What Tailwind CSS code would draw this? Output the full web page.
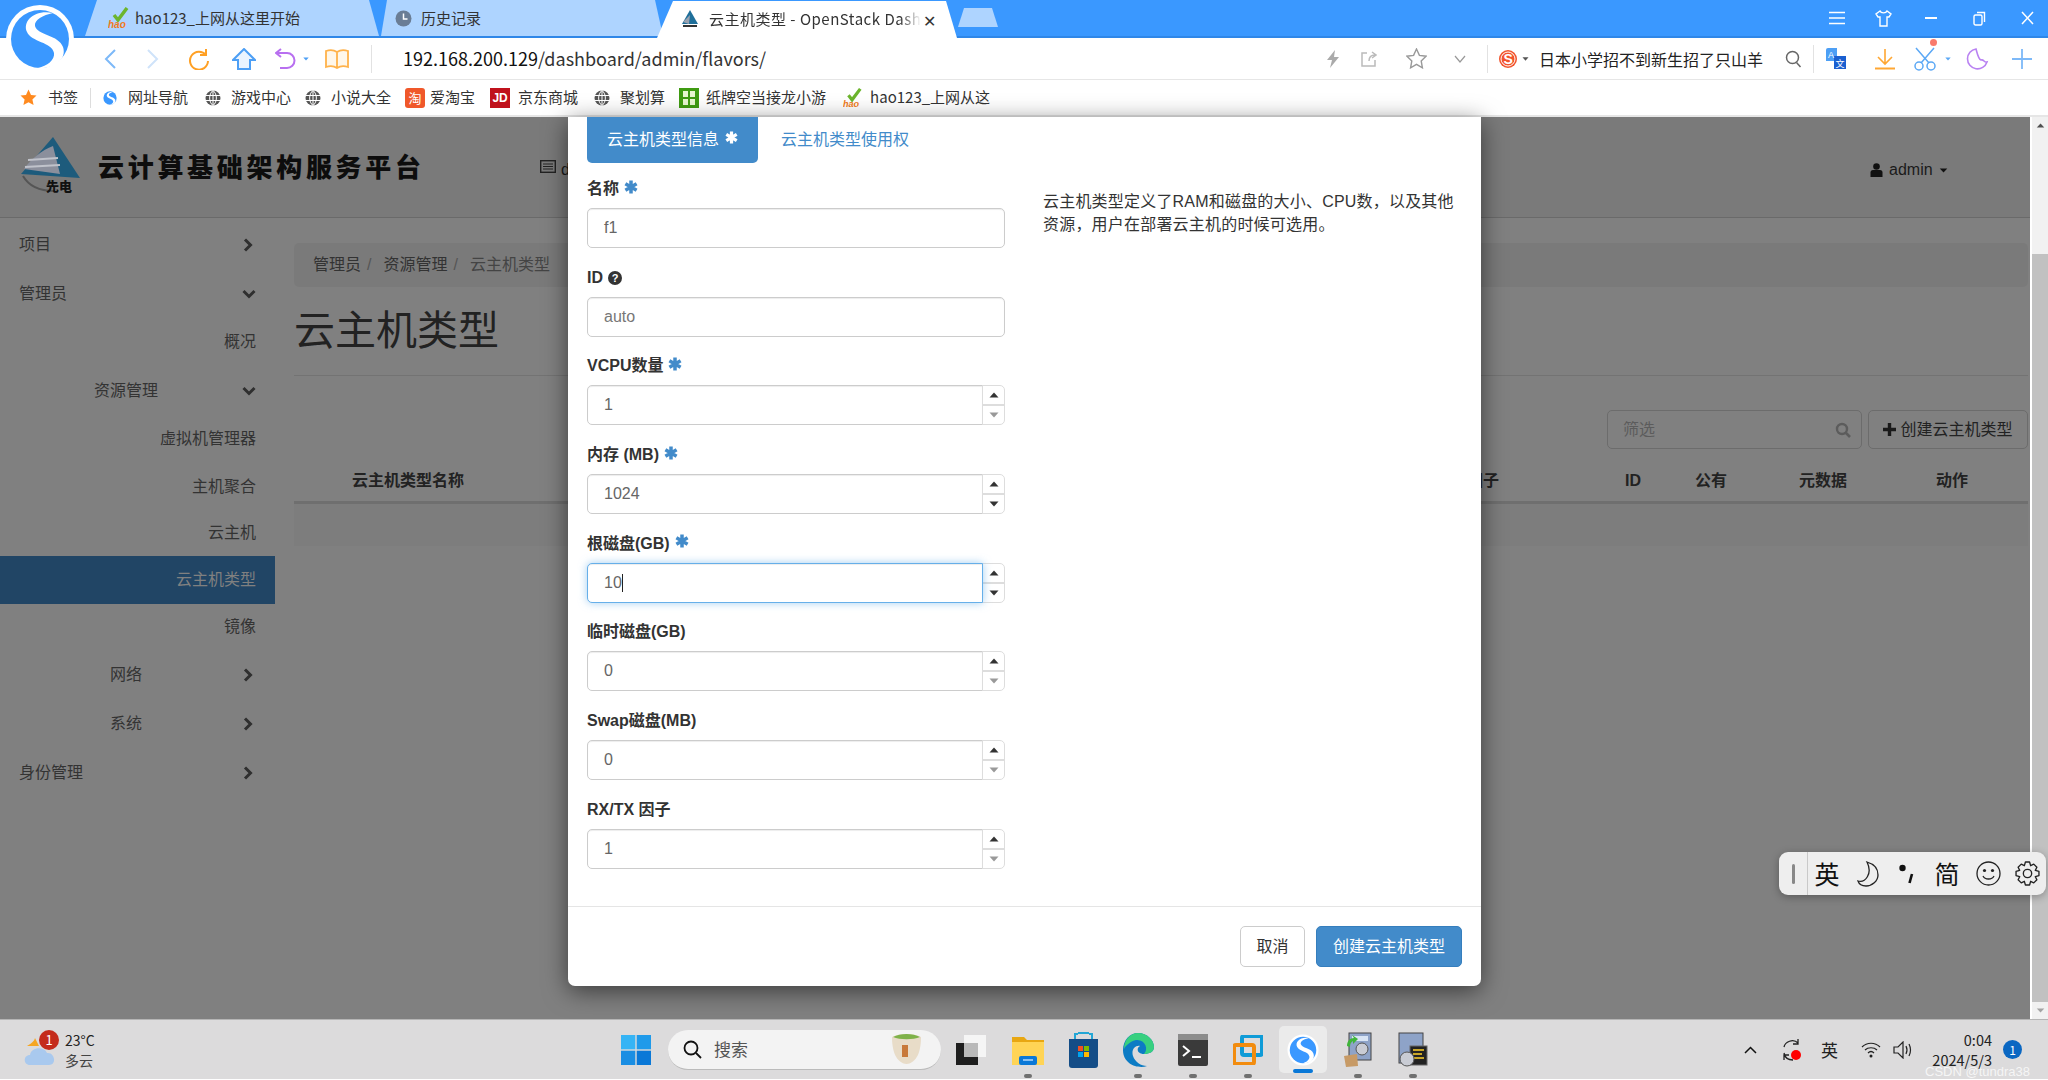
<!DOCTYPE html>
<html lang="zh-CN">
<head>
<meta charset="utf-8">
<title>云主机类型 - OpenStack Dashboard</title>
<script src="https://cdn.jsdelivr.net/npm/@tailwindcss/browser@4"></script>
</head>
<body class="m-0 overflow-hidden">
<svg width="0" height="0" class="absolute">
  <defs>
    <symbol id="ast" viewBox="0 0 12 12"><path d="M6 0.5V11.5M1.2 3.2L10.8 8.8M10.8 3.2L1.2 8.8" stroke="currentColor" stroke-width="3" fill="none"/></symbol>
    <symbol id="globe" viewBox="0 0 16 16"><circle cx="8" cy="8" r="7.5" fill="#555"/><path d="M0.5 5.5H15.5M0.5 10.5H15.5M8 0.5V15.5M8 0.5C3.5 4 3.5 12 8 15.5M8 0.5C12.5 4 12.5 12 8 15.5" stroke="#fff" stroke-width="1" fill="none"/></symbol>
    <symbol id="up" viewBox="0 0 10 6"><path d="M5 0.5L9.5 5.5H0.5Z" fill="currentColor"/></symbol>
    <symbol id="down" viewBox="0 0 10 6"><path d="M5 5.5L9.5 0.5H0.5Z" fill="currentColor"/></symbol>
    <symbol id="chevr" viewBox="0 0 10 14"><path d="M2 1.5L7.5 7L2 12.5" stroke="currentColor" stroke-width="3" fill="none"/></symbol>
    <symbol id="chevd" viewBox="0 0 14 10"><path d="M1.5 2L7 7.5L12.5 2" stroke="currentColor" stroke-width="3" fill="none"/></symbol>
    <symbol id="sogou" viewBox="0 0 70 70"><circle cx="35" cy="35" r="34" fill="#fff"/><circle cx="35" cy="35" r="29" fill="#3a98ff"/><path d="M48 9C30 5 17 17 22 28C26 38 47 38 49 49C50 56 42 62 33 64C50 65 62 55 58 43C54 31 32 31 30 22C29 16 38 11 48 9Z" fill="#fff"/></symbol>
    <symbol id="hao" viewBox="0 0 22 22"><path d="M6 8L10 13L19 1" stroke="#6cb52d" stroke-width="3.5" fill="none"/><text x="0" y="21" font-size="10" font-style="italic" font-weight="700" fill="#f07a1a" font-family="Liberation Sans">hao</text></symbol>
    <symbol id="lock" viewBox="0 0 30 36"><rect x="6" y="1" width="22" height="27" fill="#8ea3c8" stroke="#444"/><rect x="9" y="4" width="16" height="5" fill="#d8e4f4"/><circle cx="19" cy="17" r="6" fill="#c9ccd4" stroke="#555"/><path d="M1 24L14 22L15 34L3 35Z" fill="#c79a66"/><path d="M4 14C4 9 7 6 11 6L9 3L15 7L10 12L10 9C8 10 7 12 7 15Z" fill="#3fb53a"/></symbol>
  </defs>
</svg>

<div class="relative w-[2048px] h-[1080px] flex flex-col overflow-hidden bg-white font-['Noto_Sans_CJK_SC','Liberation_Sans',sans-serif]">

  <!-- browser logo -->
  <svg class="absolute left-[5px] top-[4px] w-[70px] h-[70px] z-20"><use href="#sogou"/></svg>

  <!-- tab strip -->
  <div class="h-[38px] flex items-end bg-[#3a98ff] border-b-2 border-[#2f87e8] pl-[85px] shrink-0">
    <div class="w-[294px] h-[36px] bg-[#aed4ff] [clip-path:polygon(12px_0,284px_0,100%_100%,0_100%)] flex items-center pl-[23px] text-[15px] text-[#333]">
      <svg class="w-[22px] h-[22px] mr-[5px]"><use href="#hao"/></svg>hao123_上网从这里开始
    </div>
    <div class="w-[282px] h-[36px] ml-[2px] bg-[#aed4ff] [clip-path:polygon(6px_0,274px_0,100%_100%,0_100%)] flex items-center pl-[14px] text-[15px] text-[#333]">
      <svg class="w-[17px] h-[17px] mr-[9px]" viewBox="0 0 17 17"><circle cx="8.5" cy="8.5" r="8" fill="#6a7d95"/><path d="M8.5 3.5V9H12.5" stroke="#fff" stroke-width="1.5" fill="none"/></svg>历史记录
    </div>
    <div class="w-[300px] h-[37px] -ml-[6px] -mb-[2px] bg-white [clip-path:polygon(16px_0,289px_0,100%_100%,0_100%)] flex items-center pl-[23px] text-[15px] text-[#333]">
      <svg class="w-[20px] h-[22px] mr-[9px] shrink-0" viewBox="0 0 20 22"><path d="M10 1L18 15H2Z" fill="#1f6f9a"/><path d="M3 13L10 6L9 15Z" fill="#9aa2b0"/><path d="M3 17H17" stroke="#333" stroke-width="2"/></svg>
      <span class="w-[212px] overflow-hidden whitespace-nowrap tracking-[0.5px] [mask-image:linear-gradient(to_right,black_90%,transparent)]">云主机类型 - OpenStack Dash</span>
      <span class="ml-[2px] text-[16px] leading-none">✕</span>
    </div>
    <div class="ml-[1px] mb-[9px] w-[40px] h-[19px] bg-[#aed4ff] [clip-path:polygon(6px_0,34px_0,100%_100%,0_100%)]"></div>
    <div class="ml-auto flex items-center self-start h-[36px] text-white">
      <svg class="w-[16px] h-[14px] mr-[30px]" viewBox="0 0 16 14"><path d="M0 1.5H16M0 7H16M0 12.5H16" stroke="#fff" stroke-width="1.6"/></svg>
      <svg class="w-[17px] h-[17px] mr-[33px]" viewBox="0 0 17 17"><path d="M5 1L1 4L3 7H5V16H12V7H14L16 4L12 1C11 3.5 6 3.5 5 1Z" stroke="#fff" stroke-width="1.4" fill="none"/></svg>
      <svg class="w-[12px] h-[2px] mr-[36px]" viewBox="0 0 12 2"><path d="M0 1H12" stroke="#fff" stroke-width="2"/></svg>
      <svg class="w-[13px] h-[15px] mr-[35px]" viewBox="0 0 13 15"><rect x="1" y="4" width="8" height="10" rx="1.5" stroke="#fff" stroke-width="1.4" fill="none"/><path d="M4 1.5H11.5V11" stroke="#fff" stroke-width="1.4" fill="none"/></svg>
      <svg class="w-[13px] h-[14px] mr-[14px]" viewBox="0 0 13 14"><path d="M1 1L12 13M12 1L1 13" stroke="#fff" stroke-width="1.5"/></svg>
    </div>
  </div>

  <!-- address bar -->
  <div class="h-[42px] flex items-center pl-[103px] shrink-0 border-b border-[#e6e6e6]">
    <svg class="w-[14px] h-[20px] mr-[29px]" viewBox="0 0 14 20"><path d="M12 1L3 10L12 19" stroke="#7db9f8" stroke-width="2" fill="none"/></svg>
    <svg class="w-[14px] h-[20px] mr-[28px]" viewBox="0 0 14 20"><path d="M2 1L11 10L2 19" stroke="#cfe3fa" stroke-width="2" fill="none"/></svg>
    <svg class="w-[22px] h-[22px] mr-[22px]" viewBox="0 0 22 22"><path d="M18 7A9 9 0 1 0 20 13M18 1V7H12" stroke="#ffa024" stroke-width="2" fill="none"/></svg>
    <svg class="w-[24px] h-[22px] mr-[19px]" viewBox="0 0 24 22"><path d="M12 1L23 12H18V21H6V12H1Z" stroke="#4d9ff5" stroke-width="2" fill="#eaf4ff"/></svg>
    <svg class="w-[22px] h-[22px]" viewBox="0 0 22 22"><path d="M6 1L1 5L6 9M1 5H12A7.5 7.5 0 0 1 12 20H5" stroke="#b86ff0" stroke-width="2" fill="none"/></svg>
    <svg class="w-[6px] h-[4px] ml-[6px] mr-[16px] text-[#4d9ff5]"><use href="#down"/></svg>
    <svg class="w-[24px] h-[20px] mr-[22px]" viewBox="0 0 24 20"><path d="M12 3C9 1 4 1 1 2V18C4 17 9 17 12 19C15 17 20 17 23 18V2C20 1 15 1 12 3ZM12 3V19" stroke="#ffb24a" stroke-width="1.8" fill="#fff7ea"/></svg>
    <div class="w-px h-[28px] bg-[#e2e2e2] mr-[31px]"></div>
    <div class="text-[18px] text-[#333] whitespace-nowrap w-[380px]"><span class="text-[#111]">192.168.200.129</span>/dashboard/admin/flavors/</div>
    <div class="ml-auto flex items-center">
      <svg class="w-[14px] h-[18px] mr-[21px]" viewBox="0 0 14 18"><path d="M9 0L1 10H6L4 18L13 7H8Z" fill="#aaa"/></svg>
      <svg class="w-[16px] h-[16px] mr-[29px]" viewBox="0 0 16 16"><path d="M6 2H1V15H14V9M8 10C8 6 10 4 14 4M11 1L15 4L11 7" stroke="#bbb" stroke-width="1.5" fill="none"/></svg>
      <svg class="w-[21px] h-[21px] mr-[27px]" viewBox="0 0 21 21"><path d="M10.5 1L13.4 7.4L20 8.2L15.2 12.9L16.4 19.8L10.5 16.4L4.6 19.8L5.8 12.9L1 8.2L7.6 7.4Z" stroke="#999" stroke-width="1.4" fill="none"/></svg>
      <svg class="w-[12px] h-[8px] mr-[21px]" viewBox="0 0 12 8"><path d="M1 1L6 7L11 1" stroke="#999" stroke-width="1.2" fill="none"/></svg>
      <div class="w-px h-[28px] bg-[#e2e2e2] mr-[10px]"></div>
      <svg class="w-[20px] h-[20px] mr-[4px]" viewBox="0 0 20 20"><circle cx="10" cy="10" r="9" fill="#f2542d"/><circle cx="10" cy="10" r="7" fill="none" stroke="#fff"/><text x="5.5" y="15" font-size="14" font-weight="700" fill="#fff" font-family="Liberation Sans">S</text></svg>
      <svg class="w-[7px] h-[4px] mr-[10px] text-[#555]"><use href="#down"/></svg>
      <div class="text-[16px] text-[#222] whitespace-nowrap w-[228px]">日本小学招不到新生招了只山羊</div>
      <svg class="w-[17px] h-[18px] ml-[18px] mr-[11px]" viewBox="0 0 17 18"><circle cx="7.5" cy="7.5" r="6" stroke="#666" stroke-width="1.5" fill="none"/><path d="M11.5 12.5L15.5 17" stroke="#666" stroke-width="1.5"/></svg>
      <div class="w-px h-[28px] bg-[#e2e2e2] mr-[11px]"></div>
      <svg class="w-[21px] h-[21px] mr-[28px]" viewBox="0 0 21 21"><path d="M1 2Q1 0 3 0H12V13H1Z" fill="#4d9ff5"/><path d="M9 8H21V21H9Z" fill="#1a5fd0"/><text x="3" y="10" font-size="9" fill="#fff" font-family="Liberation Sans">A</text><text x="10.5" y="19" font-size="9" fill="#fff" font-family="Noto Sans CJK SC">文</text></svg>
      <svg class="w-[22px] h-[22px] mr-[17px]" viewBox="0 0 22 22"><path d="M11 1V15M4 9L11 16L18 9" stroke="#ffa733" stroke-width="1.6" fill="none"/><path d="M1 20.5H21" stroke="#ffa733" stroke-width="2"/></svg>
      <div class="relative w-[24px] h-[24px] mr-[8px]">
        <svg class="w-[24px] h-[24px]" viewBox="0 0 24 24"><circle cx="6" cy="19" r="4" stroke="#5ba8f5" stroke-width="1.5" fill="none"/><circle cx="18" cy="19" r="4" stroke="#5ba8f5" stroke-width="1.5" fill="none"/><path d="M3 1L16 16M21 1L8 16" stroke="#5ba8f5" stroke-width="1.5"/></svg>
        <span class="absolute -top-[8px] right-[0px] w-[7px] h-[7px] rounded-full bg-[#f97a6c]"></span>
      </div>
      <svg class="w-[6px] h-[4px] mr-[14px] text-[#5ba8f5]"><use href="#down"/></svg>
      <svg class="w-[24px] h-[24px] mr-[23px]" viewBox="0 0 24 24"><path d="M11 2A10 10 0 1 0 22 15C19 16 19 12 16 13C13 12 12 5 11 2Z" stroke="#b982f2" stroke-width="1.6" fill="none"/></svg>
      <svg class="w-[20px] h-[20px] mr-[16px]" viewBox="0 0 20 20"><path d="M10 0V20M0 10H20" stroke="#7db9f8" stroke-width="1.8"/></svg>
    </div>
  </div>

  <!-- bookmarks -->
  <div class="h-[37px] flex items-center pl-[20px] text-[15px] text-[#333] whitespace-nowrap shrink-0 border-b-2 border-[#e6e6e6]">
    <svg class="w-[17px] h-[17px] mr-[11px]" viewBox="0 0 17 17"><path d="M8.5 0.5L11 6L16.5 6.6L12.4 10.4L13.6 16L8.5 13.2L3.4 16L4.6 10.4L0.5 6.6L6 6Z" fill="#ff8a1f"/></svg>
    <span>书签</span>
    <div class="w-px h-[20px] bg-[#ddd] ml-[12px] mr-[11px]"></div>
    <svg class="w-[16px] h-[16px] mr-[10px]"><use href="#sogou"/></svg><span class="mr-[17px]">网址导航</span>
    <svg class="w-[16px] h-[16px] mr-[10px]"><use href="#globe"/></svg><span class="mr-[14px]">游戏中心</span>
    <svg class="w-[16px] h-[16px] mr-[10px]"><use href="#globe"/></svg><span class="mr-[14px]">小说大全</span>
    <div class="w-[20px] h-[20px] rounded-[3px] bg-[#f0582a] text-white text-[13px] leading-[20px] text-center mr-[5px]">淘</div><span class="mr-[15px]">爱淘宝</span>
    <div class="w-[20px] h-[20px] bg-[#c0121c] text-white text-[12px] font-bold leading-[20px] text-center mr-[8px] font-['Liberation_Sans']">JD</div><span class="mr-[16px]">京东商城</span>
    <svg class="w-[16px] h-[16px] mr-[10px]"><use href="#globe"/></svg><span class="mr-[14px]">聚划算</span>
    <svg class="w-[20px] h-[20px] mr-[7px]" viewBox="0 0 20 20"><rect width="20" height="20" fill="#3f9b12"/><path d="M4 3H9V9H4ZM11 3H16V9H11ZM4 11H9V17H4ZM11 11H16V17H11Z" fill="#e8f7d0"/></svg>
    <span class="w-[120px] mr-[17px]">纸牌空当接龙小游</span>
    <svg class="w-[20px] h-[20px] mr-[7px]"><use href="#hao"/></svg><span>hao123_上网从这</span>
  </div>

  <!-- web page area -->
  <div class="relative h-[902px] flex shrink-0 font-['Liberation_Sans','Noto_Sans_CJK_SC',sans-serif] text-[16px]">
    <div class="w-[2030px] h-full flex flex-col bg-[#808080]">
      <!-- navbar -->
      <div class="h-[101px] shrink-0 bg-[#7a7a7a] border-b border-[#6a6a6a] relative flex items-center text-[#1a1a1a]">
        <svg class="ml-[20px] w-[62px] h-[58px] -mt-[5px] shrink-0" viewBox="0 0 62 58"><path d="M33 1L60 42L1 38Z" fill="#1d5b7c"/><path d="M33 10L40 38L4 33C12 22 22 14 33 10Z" fill="#8b8f9c"/><path d="M8 24L38 22M5 31L40 29" stroke="#c0c3cb" stroke-width="2"/><path d="M3 40C10 52 22 55 34 55" stroke="#555" stroke-width="2" fill="none"/><text x="26" y="55" font-size="13" font-weight="900" fill="#111" font-family="Noto Sans CJK SC">先电</text></svg>
        <div class="ml-[16px] -mt-[4px] w-[330px] text-[26px] font-black tracking-[3.7px] whitespace-nowrap text-[#0d0d0d] font-['Noto_Sans_CJK_SC']">云计算基础架构服务平台</div>
        <svg class="absolute left-[540px] top-[43px] w-[16px] h-[13px]" viewBox="0 0 16 13"><rect x="0.7" y="0.7" width="14.6" height="11.6" fill="none" stroke="#222" stroke-width="1.4"/><path d="M3 4H13M3 6.5H13M3 9H13" stroke="#222" stroke-width="1.2"/></svg>
        <span class="absolute left-[561px] top-[41px]">d</span>
        <div class="absolute left-[1870px] top-[41px] flex items-center text-[#1a1a1a]">
          <svg class="w-[13px] h-[14px] mr-[6px]" viewBox="0 0 13 14"><circle cx="6.5" cy="3.5" r="3.3" fill="#111"/><path d="M0.5 14V9.5Q0.5 7 3 7H10Q12.5 7 12.5 9.5V14Z" fill="#111"/></svg>
          <span>admin</span>
          <svg class="w-[9px] h-[5px] ml-[6px] text-[#111]"><use href="#down"/></svg>
        </div>
      </div>
      <div class="flex flex-1">
        <!-- sidebar -->
        <div class="w-[275px] shrink-0 pt-[3px] text-[#333]">
          <div class="h-[48px] flex items-center justify-between pl-[19px] pr-[22px]"><span>项目</span><svg class="w-[10px] h-[14px] text-[#2f2f2f]"><use href="#chevr"/></svg></div>
          <div class="h-[49px] flex items-center justify-between pl-[19px] pr-[19px]"><span>管理员</span><svg class="w-[14px] h-[10px] text-[#2f2f2f]"><use href="#chevd"/></svg></div>
          <div class="h-[48px] flex items-center justify-end pr-[19px]">概况</div>
          <div class="h-[49px] flex items-center justify-between pl-[94px] pr-[19px]"><span>资源管理</span><svg class="w-[14px] h-[10px] text-[#2f2f2f]"><use href="#chevd"/></svg></div>
          <div class="h-[48px] flex items-center justify-end pr-[19px]">虚拟机管理器</div>
          <div class="h-[47px] flex items-center justify-end pr-[19px]">主机聚合</div>
          <div class="h-[46px] flex items-center justify-end pr-[19px]">云主机</div>
          <div class="h-[48px] flex items-center justify-end pr-[19px] bg-[#214565] text-[#808080]">云主机类型</div>
          <div class="h-[46px] flex items-center justify-end pr-[19px]">镜像</div>
          <div class="h-[49px] flex items-center justify-between pl-[110px] pr-[22px]"><span>网络</span><svg class="w-[10px] h-[14px] text-[#2f2f2f]"><use href="#chevr"/></svg></div>
          <div class="h-[49px] flex items-center justify-between pl-[110px] pr-[22px]"><span>系统</span><svg class="w-[10px] h-[14px] text-[#2f2f2f]"><use href="#chevr"/></svg></div>
          <div class="h-[49px] flex items-center justify-between pl-[19px] pr-[22px]"><span>身份管理</span><svg class="w-[10px] h-[14px] text-[#2f2f2f]"><use href="#chevr"/></svg></div>
        </div>
        <!-- main -->
        <div class="flex-1 pl-[19px] pr-[2px] pt-[25px] text-[#222]">
          <div class="h-[44px] rounded-[5px] bg-[#7a7a7a] pl-[19px] flex items-center text-[#333]">
            <span>管理员</span><span class="mx-[6px] text-[#555]">/</span><span class="ml-[6px]">资源管理</span><span class="mx-[6px] text-[#555]">/</span><span class="ml-[6px] text-[#444]">云主机类型</span>
          </div>
          <div class="h-[89px] pt-[14px] border-b border-[#737373] text-[41px] leading-[60px] text-[#222]">云主机类型</div>
          <div class="mt-[34px] flex justify-end gap-[6px]">
            <div class="w-[255px] h-[39px] rounded-[5px] border border-[#6c6c6c] flex items-center justify-between pl-[15px] pr-[10px] text-[#5c5c5c]">
              <span>筛选</span>
              <svg class="w-[16px] h-[16px]" viewBox="0 0 16 16"><circle cx="7" cy="7" r="5" stroke="#5c5c5c" stroke-width="2.4" fill="none"/><path d="M10.5 10.5L15 15" stroke="#5c5c5c" stroke-width="2.6"/></svg>
            </div>
            <div class="w-[160px] h-[39px] rounded-[5px] border border-[#6c6c6c] flex items-center justify-center text-[#222]">
              <svg class="w-[13px] h-[13px] mr-[4px]" viewBox="0 0 13 13"><path d="M6.5 0V13M0 6.5H13" stroke="#1a1a1a" stroke-width="3.4"/></svg>创建云主机类型
            </div>
          </div>
          <div class="mt-[11px] h-[44px] flex items-center border-b-[3px] border-[#6f6f6f] font-bold text-[#222]">
            <div class="w-[1205px] pl-[58px] flex justify-between"><span>云主机类型名称</span><span>因子</span></div>
            <span class="ml-[126px] w-[16px]">ID</span>
            <span class="ml-[54px]">公有</span>
            <span class="ml-[72px]">元数据</span>
            <span class="ml-[89px]">动作</span>
          </div>
          <div class="h-[42px] bg-[#7d7d7d]"></div>
        </div>
      </div>
    </div>

    <!-- scrollbar -->
    <div class="w-[18px] h-full bg-[#f1f1f1] flex flex-col items-center border-l-2 border-white">
      <div class="h-[17px] flex items-center justify-center"><svg class="w-[9px] h-[5px] text-[#505050]"><use href="#up"/></svg></div>
      <div class="mt-[120px] w-full h-[748px] bg-[#c1c1c1]"></div>
      <div class="mt-auto h-[17px] flex items-center justify-center"><svg class="w-[9px] h-[5px] text-[#a3a3a3]"><use href="#down"/></svg></div>
    </div>

    <!-- modal -->
    <div class="absolute left-[568px] top-0 w-[913px] h-[869px] bg-white rounded-b-[7px] shadow-[0_5px_25px_rgba(0,0,0,0.55)] flex flex-col text-[#333]">
      <div class="flex-1 pl-[19px] flex">
        <div class="w-[418px] shrink-0">
          <div class="flex h-[46px]">
            <div class="w-[171px] h-full rounded-b-[5px] bg-[#428bca] text-white pl-[20px] flex items-center">云主机类型信息<svg class="w-[13px] h-[13px] ml-[6px] -mt-[6px] text-white"><use href="#ast"/></svg></div>
            <div class="ml-[23px] flex items-center text-[#428bca]">云主机类型使用权</div>
          </div>
          <div class="mt-[14px] flex flex-col">
            <!-- name -->
            <div class="h-[88.7px]">
              <div class="h-[24px] mb-[7px] flex items-center font-bold">名称<svg class="w-[14px] h-[14px] ml-[5px] -mt-[5px] text-[#428bca]"><use href="#ast"/></svg></div>
              <div class="h-[40px] rounded-[5px] border border-[#ccc] shadow-[inset_0_1px_1px_rgba(0,0,0,0.075)] flex items-center pl-[16px] text-[#666]">f1</div>
            </div>
            <!-- id -->
            <div class="h-[88.7px]">
              <div class="h-[24px] mb-[7px] flex items-center font-bold">ID<svg class="w-[14px] h-[14px] ml-[5px]" viewBox="0 0 14 14"><circle cx="7" cy="7" r="7" fill="#333"/><text x="7" y="11" text-anchor="middle" font-size="11" font-weight="700" fill="#fff" font-family="Liberation Sans">?</text></svg></div>
              <div class="h-[40px] rounded-[5px] border border-[#ccc] shadow-[inset_0_1px_1px_rgba(0,0,0,0.075)] flex items-center pl-[16px] text-[#777]">auto</div>
            </div>
            <!-- vcpu -->
            <div class="h-[88.7px]">
              <div class="h-[24px] mb-[7px] flex items-center font-bold">VCPU数量<svg class="w-[14px] h-[14px] ml-[5px] -mt-[5px] text-[#428bca]"><use href="#ast"/></svg></div>
              <div class="h-[40px] flex">
                <div class="flex-1 rounded-l-[5px] border border-[#ccc] shadow-[inset_0_1px_1px_rgba(0,0,0,0.075)] flex items-center pl-[16px] text-[#666]">1</div>
                <div class="w-[23px] -ml-px flex flex-col rounded-r-[5px] border border-[#ddd]">
                  <div class="flex-1 flex items-center justify-center border-b-2 border-[#ddd] text-[#333]"><svg class="w-[10px] h-[6px]"><use href="#up"/></svg></div>
                  <div class="flex-1 flex items-center justify-center text-[#999]"><svg class="w-[10px] h-[6px]"><use href="#down"/></svg></div>
                </div>
              </div>
            </div>
            <!-- ram -->
            <div class="h-[88.7px]">
              <div class="h-[24px] mb-[7px] flex items-center font-bold">内存 (MB)<svg class="w-[14px] h-[14px] ml-[5px] -mt-[5px] text-[#428bca]"><use href="#ast"/></svg></div>
              <div class="h-[40px] flex">
                <div class="flex-1 rounded-l-[5px] border border-[#ccc] shadow-[inset_0_1px_1px_rgba(0,0,0,0.075)] flex items-center pl-[16px] text-[#666]">1024</div>
                <div class="w-[23px] -ml-px flex flex-col rounded-r-[5px] border border-[#ddd]">
                  <div class="flex-1 flex items-center justify-center border-b-2 border-[#ddd] text-[#333]"><svg class="w-[10px] h-[6px]"><use href="#up"/></svg></div>
                  <div class="flex-1 flex items-center justify-center text-[#333]"><svg class="w-[10px] h-[6px]"><use href="#down"/></svg></div>
                </div>
              </div>
            </div>
            <!-- disk -->
            <div class="h-[88.7px]">
              <div class="h-[24px] mb-[7px] flex items-center font-bold">根磁盘(GB)<svg class="w-[14px] h-[14px] ml-[5px] -mt-[5px] text-[#428bca]"><use href="#ast"/></svg></div>
              <div class="h-[40px] flex">
                <div class="relative z-10 flex-1 rounded-l-[5px] border border-[#66afe9] shadow-[inset_0_1px_1px_rgba(0,0,0,0.075),0_0_8px_rgba(102,175,233,0.6)] flex items-center pl-[16px] text-[#666] bg-white">10<span class="w-[1px] h-[18px] bg-[#222]"></span></div>
                <div class="w-[23px] -ml-px flex flex-col rounded-r-[5px] border border-[#ddd]">
                  <div class="flex-1 flex items-center justify-center border-b-2 border-[#ddd] text-[#333]"><svg class="w-[10px] h-[6px]"><use href="#up"/></svg></div>
                  <div class="flex-1 flex items-center justify-center text-[#333]"><svg class="w-[10px] h-[6px]"><use href="#down"/></svg></div>
                </div>
              </div>
            </div>
            <!-- ephemeral -->
            <div class="h-[88.7px]">
              <div class="h-[24px] mb-[7px] flex items-center font-bold">临时磁盘(GB)</div>
              <div class="h-[40px] flex">
                <div class="flex-1 rounded-l-[5px] border border-[#ccc] shadow-[inset_0_1px_1px_rgba(0,0,0,0.075)] flex items-center pl-[16px] text-[#666]">0</div>
                <div class="w-[23px] -ml-px flex flex-col rounded-r-[5px] border border-[#ddd]">
                  <div class="flex-1 flex items-center justify-center border-b-2 border-[#ddd] text-[#333]"><svg class="w-[10px] h-[6px]"><use href="#up"/></svg></div>
                  <div class="flex-1 flex items-center justify-center text-[#999]"><svg class="w-[10px] h-[6px]"><use href="#down"/></svg></div>
                </div>
              </div>
            </div>
            <!-- swap -->
            <div class="h-[88.7px]">
              <div class="h-[24px] mb-[7px] flex items-center font-bold">Swap磁盘(MB)</div>
              <div class="h-[40px] flex">
                <div class="flex-1 rounded-l-[5px] border border-[#ccc] shadow-[inset_0_1px_1px_rgba(0,0,0,0.075)] flex items-center pl-[16px] text-[#666]">0</div>
                <div class="w-[23px] -ml-px flex flex-col rounded-r-[5px] border border-[#ddd]">
                  <div class="flex-1 flex items-center justify-center border-b-2 border-[#ddd] text-[#333]"><svg class="w-[10px] h-[6px]"><use href="#up"/></svg></div>
                  <div class="flex-1 flex items-center justify-center text-[#999]"><svg class="w-[10px] h-[6px]"><use href="#down"/></svg></div>
                </div>
              </div>
            </div>
            <!-- rxtx -->
            <div class="h-[88.7px]">
              <div class="h-[24px] mb-[7px] flex items-center font-bold">RX/TX 因子</div>
              <div class="h-[40px] flex">
                <div class="flex-1 rounded-l-[5px] border border-[#ccc] shadow-[inset_0_1px_1px_rgba(0,0,0,0.075)] flex items-center pl-[16px] text-[#666]">1</div>
                <div class="w-[23px] -ml-px flex flex-col rounded-r-[5px] border border-[#ddd]">
                  <div class="flex-1 flex items-center justify-center border-b-2 border-[#ddd] text-[#333]"><svg class="w-[10px] h-[6px]"><use href="#up"/></svg></div>
                  <div class="flex-1 flex items-center justify-center text-[#999]"><svg class="w-[10px] h-[6px]"><use href="#down"/></svg></div>
                </div>
              </div>
            </div>
          </div>
        </div>
        <div class="ml-[38px] mt-[73px] w-[420px] leading-[23px] tracking-[0.2px] text-[#333]">云主机类型定义了RAM和磁盘的大小、CPU数，以及其他资源，用户在部署云主机的时候可选用。</div>
      </div>
      <div class="h-[80px] shrink-0 border-t border-[#e5e5e5] flex items-center justify-end gap-[11px] pr-[19px]">
        <div class="w-[65px] h-[41px] rounded-[5px] border border-[#ccc] flex items-center justify-center text-[#333]">取消</div>
        <div class="w-[146px] h-[41px] rounded-[5px] bg-[#428bca] border border-[#357ebd] flex items-center justify-center text-white">创建云主机类型</div>
      </div>
    </div>

    <!-- IME floating bar -->
    <div class="absolute left-[1779px] top-[735px] w-[267px] h-[43px] rounded-[9px] bg-[#eeeeee] shadow-[0_2px_8px_rgba(0,0,0,0.3)] flex items-center text-[#111] font-['Noto_Sans_CJK_SC']">
      <div class="w-[29px] h-full border-r border-[#c9c9c9] flex items-center justify-center"><span class="w-[3px] h-[20px] rounded-full bg-[#888]"></span></div>
      <span class="ml-[6px] w-[26px] text-[25px] leading-none text-center">英</span>
      <svg class="ml-[17px] w-[24px] h-[26px]" viewBox="0 0 24 26"><path d="M10 1C17 3 21 8 21 14C21 20 15 25 9 25C5 25 2 23 1 20C8 22 16 13 10 1Z" stroke="#222" stroke-width="1.3" fill="none"/></svg>
      <svg class="ml-[17px] w-[18px] h-[22px]" viewBox="0 0 18 22"><circle cx="4.5" cy="5" r="3.2" fill="#111"/><path d="M14 11L11.5 20" stroke="#111" stroke-width="2.6"/></svg>
      <span class="ml-[18px] w-[26px] text-[25px] leading-none text-center">简</span>
      <svg class="ml-[16px] w-[25px] h-[25px]" viewBox="0 0 25 25"><circle cx="12.5" cy="12.5" r="11.5" stroke="#222" stroke-width="1.3" fill="none"/><circle cx="8.5" cy="9.5" r="1.6" fill="#222"/><circle cx="16.5" cy="9.5" r="1.6" fill="#222"/><path d="M7 15C9 19 16 19 18 15" stroke="#222" stroke-width="1.3" fill="none"/></svg>
      <svg class="ml-[14px] w-[25px] h-[25px]" viewBox="0 0 24 24"><path d="M10 1H14L15 4.5L18 3L21 6L19.5 9L23 10V14L19.5 15L21 18L18 21L15 19.5L14 23H10L9 19.5L6 21L3 18L4.5 15L1 14V10L4.5 9L3 6L6 3L9 4.5Z" stroke="#222" stroke-width="1.3" fill="none" stroke-linejoin="round"/><circle cx="12" cy="12" r="4" stroke="#222" stroke-width="1.3" fill="none"/></svg>
    </div>
  </div>

  <!-- taskbar -->
  <div class="relative h-[60px] shrink-0 bg-[#dcdbdc] border-t border-[#b5b5b5] flex items-center font-['Noto_Sans_CJK_SC'] text-[#222]">
    <div class="relative ml-[24px] w-[32px] h-[36px]">
      <svg class="w-[32px] h-[36px]" viewBox="0 0 32 36"><path d="M3 14C6 12 10 10 11 6L15 14Z" fill="#f5a623"/><path d="M6 33C-1 33 -1 23 6 23C7 15 20 14 23 21C31 20 33 33 25 33Z" fill="#a9c9ee"/></svg>
      <span class="absolute left-[15px] -top-[2px] w-[20px] h-[20px] rounded-full bg-[#c42b1c] text-white text-[13px] leading-[20px] text-center">1</span>
    </div>
    <div class="ml-[9px] w-[40px] text-[14px] leading-[20px]"><div>23°C</div><div class="text-[#444]">多云</div></div>
    <svg class="ml-[516px] w-[30px] h-[30px]" viewBox="0 0 30 30"><rect width="14.3" height="14.3" fill="#35b4f5"/><rect x="15.7" width="14.3" height="14.3" fill="#1f9aea"/><rect y="15.7" width="14.3" height="14.3" fill="#1a8ee3"/><rect x="15.7" y="15.7" width="14.3" height="14.3" fill="#0a78d7"/></svg>
    <div class="ml-[17px] w-[273px] h-[40px] rounded-full bg-[#f3f3f3] border-b border-[#bbb] flex items-center pl-[15px] pr-[19px]">
      <svg class="w-[19px] h-[19px]" viewBox="0 0 19 19"><circle cx="8" cy="8" r="6.5" stroke="#111" stroke-width="1.8" fill="none"/><path d="M13 13L18 18" stroke="#111" stroke-width="1.8"/></svg>
      <span class="ml-[12px] text-[17px] text-[#555]">搜索</span>
      <svg class="ml-auto w-[31px] h-[36px]" viewBox="0 0 31 36"><path d="M1 6C8 2 23 2 30 6C30 20 26 32 15.5 33C5 32 1 20 1 6Z" fill="#e8dcc8"/><path d="M2 6C9 9 22 9 29 6C22 2 9 2 2 6Z" fill="#7fb24a"/><path d="M11 14H17V26H11Z" fill="#c8793a"/></svg>
    </div>
    <!-- pinned apps -->
    <div class="ml-[15px] w-[30px] h-[30px] relative">
      <svg class="w-[30px] h-[30px]" viewBox="0 0 30 30"><rect x="0" y="8" width="22" height="22" fill="#1e1e1e"/><rect x="8" y="0" width="22" height="22" fill="#f5f5f5"/><rect x="8" y="8" width="14" height="14" fill="#b9b9b9"/></svg>
    </div>
    <div class="ml-[20px] w-[44px] h-[44px] flex flex-col items-center justify-center relative">
      <svg class="w-[32px] h-[30px]" viewBox="0 0 32 30"><path d="M0 2H12L15 5H32V30H0Z" fill="#e8a712"/><rect x="0" y="7" width="32" height="23" fill="#ffd455"/><rect x="7" y="21" width="18" height="9" rx="2" fill="#0a78d7"/><path d="M11 25H21" stroke="#bfe0ff" stroke-width="1.4"/></svg>
      <span class="absolute -bottom-[6px] w-[8px] h-[4px] rounded-full bg-[#707070]"></span>
    </div>
    <div class="ml-[11px] w-[44px] h-[44px] flex items-center justify-center">
      <svg class="w-[29px] h-[36px]" viewBox="0 0 29 36"><path d="M6 8V2H9M23 8V2H20M9 1H20" stroke="#23a6d5" stroke-width="2" fill="none"/><path d="M0 7H29V33Q29 36 26 36H3Q0 36 0 33Z" fill="#144d87"/><rect x="9" y="14" width="5" height="5" fill="#f25022"/><rect x="15" y="14" width="5" height="5" fill="#7fba00"/><rect x="9" y="20" width="5" height="5" fill="#00a4ef"/><rect x="15" y="20" width="5" height="5" fill="#ffb900"/></svg>
    </div>
    <div class="ml-[11px] w-[44px] h-[44px] flex items-center justify-center relative">
      <svg class="w-[31px] h-[34px]" viewBox="0 0 31 34"><path d="M15 0C24 0 31 7 31 14C31 19 26 21 21 21C14 21 13 15 17 13C12 12 8 17 10 23C12 29 18 33 24 33C16 36 0 32 0 17C0 7 7 0 15 0Z" fill="#0c7bc4"/><path d="M15 0C24 0 31 7 31 14C31 19 26 21 21 21C26 16 22 6 13 7C8 8 3 12 1 16C1 7 7 0 15 0Z" fill="#38d07f"/></svg>
      <span class="absolute -bottom-[6px] w-[8px] h-[4px] rounded-full bg-[#707070]"></span>
    </div>
    <div class="ml-[11px] w-[44px] h-[44px] flex items-center justify-center relative">
      <svg class="w-[30px] h-[32px]" viewBox="0 0 30 32"><rect width="30" height="32" rx="2" fill="#3a3a3a"/><rect width="30" height="6" fill="#8c8c8c"/><path d="M5 12L11 17L5 22" stroke="#fff" stroke-width="2" fill="none"/><path d="M14 23H23" stroke="#fff" stroke-width="2"/></svg>
      <span class="absolute -bottom-[6px] w-[8px] h-[4px] rounded-full bg-[#707070]"></span>
    </div>
    <div class="ml-[11px] w-[44px] h-[44px] flex items-center justify-center relative">
      <svg class="w-[30px] h-[30px]" viewBox="0 0 30 30"><rect x="9" y="1" width="20" height="19" rx="2" fill="none" stroke="#0f9bd7" stroke-width="4"/><rect x="1" y="10" width="20" height="19" rx="2" fill="none" stroke="#f28c0f" stroke-width="4"/></svg>
      <span class="absolute -bottom-[6px] w-[8px] h-[4px] rounded-full bg-[#707070]"></span>
    </div>
    <div class="ml-[9px] w-[48px] h-[47px] rounded-[5px] bg-[#ebebeb] flex items-center justify-center relative">
      <svg class="w-[32px] h-[32px]"><use href="#sogou"/></svg>
      <span class="absolute bottom-[0px] w-[20px] h-[4px] rounded-full bg-[#0a78d7]"></span>
    </div>
    <div class="ml-[9px] w-[44px] h-[44px] flex items-center justify-center relative">
      <svg class="w-[30px] h-[36px]"><use href="#lock"/></svg>
      <span class="absolute -bottom-[6px] w-[8px] h-[4px] rounded-full bg-[#707070]"></span>
    </div>
    <div class="ml-[11px] w-[44px] h-[44px] flex items-center justify-center relative">
      <svg class="w-[30px] h-[36px]" viewBox="0 0 30 36"><rect x="1" y="1" width="24" height="30" fill="#8ea3c8" stroke="#444"/><rect x="12" y="14" width="17" height="19" fill="#222" stroke="#666"/><path d="M15 18H26M15 22H24M15 26H26" stroke="#c8a528" stroke-width="2"/><circle cx="9" cy="27" r="7" fill="#c9ccd4" stroke="#555"/></svg>
      <span class="absolute -bottom-[6px] w-[8px] h-[4px] rounded-full bg-[#707070]"></span>
    </div>
    <!-- tray -->
    <div class="ml-auto flex items-center">
      <svg class="w-[13px] h-[8px] mr-[24px]" viewBox="0 0 13 8"><path d="M1 7L6.5 1.5L12 7" stroke="#111" stroke-width="1.5" fill="none"/></svg>
      <svg class="w-[22px] h-[24px] mr-[18px]" viewBox="0 0 22 24"><path d="M3 9C4 4 12 0 17 5M17 1V6H12M3 15C4 20 8 22 12 22M3 22V17H8" stroke="#222" stroke-width="1.3" fill="none"/><circle cx="15" cy="17" r="5" fill="#f00"/></svg>
      <span class="text-[17px] w-[20px] mr-[20px]">英</span>
      <svg class="w-[20px] h-[16px] mr-[12px]" viewBox="0 0 20 16"><path d="M1 5C6 0 14 0 19 5M4 8C7 5 13 5 16 8M7 11C9 9 11 9 13 11" stroke="#222" stroke-width="1.2" fill="none"/><circle cx="10" cy="14" r="1.5" fill="#222"/></svg>
      <svg class="w-[22px] h-[18px] mr-[15px]" viewBox="0 0 22 18"><path d="M1 6H5L10 1V17L5 12H1Z" stroke="#222" stroke-width="1.2" fill="none"/><path d="M13 5Q15 9 13 13M16 3Q19 9 16 15" stroke="#222" stroke-width="1.2" fill="none"/></svg>
      <div class="w-[62px] text-right text-[14.5px] leading-[20px]"><div>0:04</div><div>2024/5/3</div></div>
      <span class="ml-[11px] mr-[26px] w-[19px] h-[19px] rounded-full bg-[#0a67c2] text-white text-[12px] leading-[19px] text-center">1</span>
    </div>
    <span class="absolute left-[1925px] top-[44px] text-[13px] leading-[15px] text-white/75 font-['Liberation_Sans'] whitespace-nowrap">CSDN @tundra38</span>
  </div>
</div>
</body>
</html>
